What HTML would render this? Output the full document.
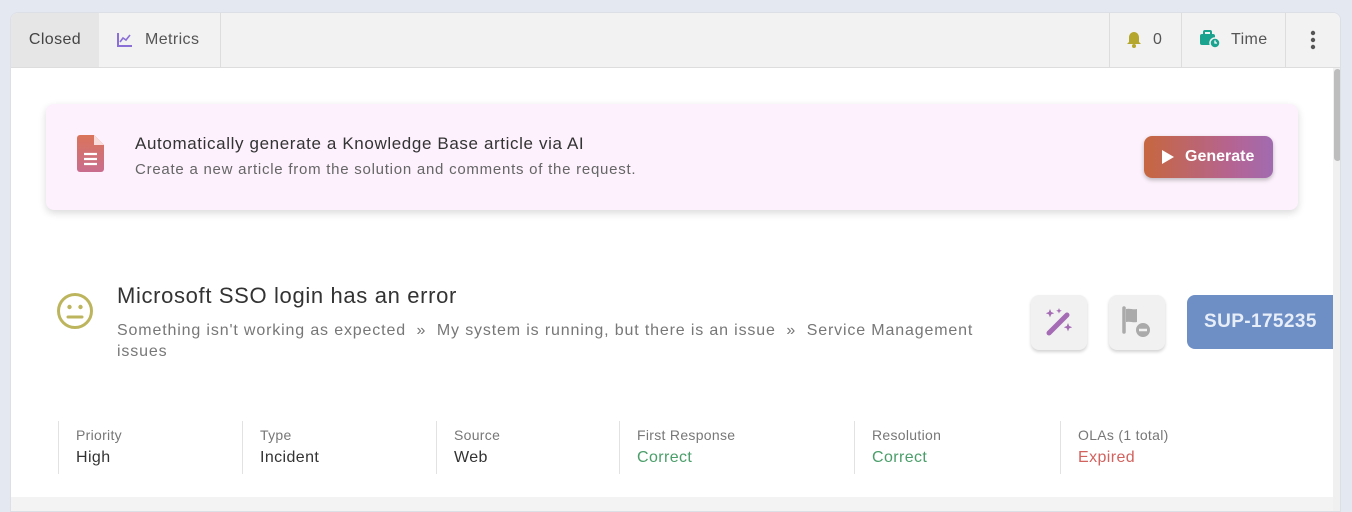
<!DOCTYPE html>
<html><head><meta charset="utf-8"><style>
*{box-sizing:border-box;margin:0;padding:0}
body{width:1352px;height:502px;overflow:hidden;background:#e4e8f1;font-family:"Liberation Sans",sans-serif;position:relative}
.card{position:absolute;left:10px;top:12px;width:1331px;height:500px;background:#fff;border-radius:8px 8px 0 0;overflow:hidden;border:1px solid #dcdfe6}
.hdr{position:absolute;left:0;top:0;width:100%;height:55px;background:#f2f2f2;border-bottom:1px solid #ddd}
.tab{position:absolute;top:0;height:54px;line-height:54px;font-size:16px;color:#555;letter-spacing:.4px}
.abs{position:absolute}
.sep{position:absolute;top:0;width:1px;height:54px;background:#ddd}
.kb{position:absolute;left:35px;top:91px;width:1252px;height:106px;background:#fcf1fc;border-radius:8px;box-shadow:0 3px 8px rgba(0,0,0,.15)}
.btn{position:absolute;left:1098px;top:32px;width:129px;height:42px;border-radius:8px;background:linear-gradient(90deg,#c6673f,#b46494 70%,#a16bb0);color:#fff;font-size:16px;font-weight:bold;line-height:42px;box-shadow:0 2px 4px rgba(0,0,0,.25)}
.ib{position:absolute;top:282px;width:56px;height:55px;background:#f1f1f1;border-radius:8px;box-shadow:0 2px 3px rgba(0,0,0,.18)}
.lbl{position:absolute;top:414px;font-size:14px;color:#777;letter-spacing:.3px}
.val{position:absolute;top:436px;font-size:16px;color:#333;letter-spacing:.4px}
.vl{position:absolute;top:408px;width:1px;height:53px;background:#e2e2e2}
</style></head><body>
<div class="card">
 <div class="hdr">
  <div class="tab" style="left:0;width:88px;background:#e6e6e6;text-align:center;color:#444">Closed</div>
  <svg class="abs" style="left:106px;top:19px" width="16" height="15" viewBox="0 0 16 15"><path d="M1 1v13h14" stroke="#8a6fd6" stroke-width="2" fill="none"/><path d="M3 10l3-4 3 2 4-5" stroke="#8a6fd6" stroke-width="1.6" fill="none"/></svg>
  <div class="tab" style="left:134px">Metrics</div>
  <div class="sep" style="left:209px"></div>
  <div class="sep" style="left:1098px"></div>
  <svg class="abs" style="left:1115px;top:18px" width="16" height="17" viewBox="0 0 16 17"><path d="M8 1c-3 0-5 2.5-5 5.5V11L1 13h14l-2-2V6.5C13 3.5 11 1 8 1z" fill="#b5a72d"/><circle cx="8" cy="15" r="2" fill="#b5a72d"/></svg>
  <div class="tab" style="left:1142px;color:#555">0</div>
  <div class="sep" style="left:1170px"></div>
  <svg class="abs" style="left:1188px;top:17px" width="22" height="19" viewBox="0 0 22 19"><rect x="1" y="4" width="15" height="11" rx="2" fill="#1aa38f"/><rect x="5" y="1" width="7" height="4" rx="1" fill="none" stroke="#1aa38f" stroke-width="2"/><circle cx="16" cy="13" r="5" fill="#1aa38f" stroke="#f2f2f2" stroke-width="1.5"/><path d="M16 10.5v2.5h2" stroke="#fff" stroke-width="1.3" fill="none"/></svg>
  <div class="tab" style="left:1220px">Time</div>
  <div class="sep" style="left:1274px"></div>
  <svg class="abs" style="left:1299px;top:17px" width="6" height="20"><circle cx="3" cy="3" r="2.2" fill="#555"/><circle cx="3" cy="10" r="2.2" fill="#555"/><circle cx="3" cy="17" r="2.2" fill="#555"/></svg>
 </div>
 <div class="kb">
  <svg class="abs" style="left:31px;top:31px" width="27" height="37" viewBox="0 0 27 37"><defs><linearGradient id="g" x1="0" y1="0" x2="0" y2="1"><stop offset="0" stop-color="#da745a"/><stop offset="1" stop-color="#c96d8e"/></linearGradient></defs><path d="M3 0h14l10 10v24a3 3 0 0 1-3 3H3a3 3 0 0 1-3-3V3a3 3 0 0 1 3-3z" fill="url(#g)"/><path d="M17 0v10h10" fill="#f9dcdc"/><path d="M7 19h13M7 24h13M7 29h13" stroke="#fff" stroke-width="2.2"/></svg>
  <div class="abs" style="left:89px;top:30px;font-size:17px;letter-spacing:.62px;color:#333">Automatically generate a Knowledge Base article via AI</div>
  <div class="abs" style="left:89px;top:57px;font-size:15px;letter-spacing:.75px;color:#666">Create a new article from the solution and comments of the request.</div>
  <div class="btn"><svg class="abs" style="left:18px;top:14px" width="12" height="14"><path d="M0 0l12 7-12 7z" fill="#fff"/></svg><span style="position:absolute;left:41px">Generate</span></div>
 </div>
 <svg class="abs" style="left:45px;top:279px" width="38" height="38" viewBox="0 0 38 38"><circle cx="19" cy="19" r="16.5" fill="none" stroke="#bdb55e" stroke-width="3"/><circle cx="13.5" cy="15" r="2.2" fill="#bdb55e"/><circle cx="24.5" cy="15" r="2.2" fill="#bdb55e"/><path d="M12 25h14" stroke="#bdb55e" stroke-width="3" stroke-linecap="round"/></svg>
 <div class="abs" style="left:106px;top:270px;font-size:22px;letter-spacing:.65px;color:#333">Microsoft SSO login has an error</div>
 <div class="abs" style="left:106px;top:307px;width:880px;font-size:16px;letter-spacing:.85px;line-height:21px;color:#777">Something isn't working as expected &nbsp;»&nbsp; My system is running, but there is an issue &nbsp;»&nbsp; Service Management issues</div>
 <div class="ib" style="left:1020px"><svg class="abs" style="left:10px;top:10px" width="34" height="34" viewBox="0 0 34 34"><path d="M8 28L26 10" stroke="#a56cb5" stroke-width="5" stroke-linecap="round"/><path d="M9 4l1.2 3 3 1.2-3 1.2L9 12.4 7.8 9.4 4.8 8.2l3-1.2z M18 3l.8 2 2 .8-2 .8-.8 2-.8-2-2-.8 2-.8z M27 18l1.2 3 3 1.2-3 1.2-1.2 3-1.2-3-3-1.2 3-1.2z" fill="#a56cb5"/></svg></div>
 <div class="ib" style="left:1098px"><svg class="abs" style="left:12px;top:11px" width="34" height="34" viewBox="0 0 34 34"><path d="M3 2v24" stroke="#aaa" stroke-width="3.5" stroke-linecap="round"/><path d="M5 3c4-1 7 1 11 0v13c-4 1-7-1-11 0z" fill="#aaa"/><circle cx="22" cy="24" r="8" fill="#aaa" stroke="#f1f1f1" stroke-width="2"/><path d="M18 24h8" stroke="#f1f1f1" stroke-width="2.5"/></svg></div>
 <div class="abs" style="left:1176px;top:282px;width:160px;height:54px;border-radius:8px 0 0 8px;background:#6e8fc6;color:#e8eef8;font-size:19px;font-weight:bold;letter-spacing:.4px;line-height:54px;padding-left:17px">SUP-175235</div>
 <div class="vl" style="left:47px"></div>
 <div class="lbl" style="left:65px">Priority</div><div class="val" style="left:65px">High</div>
 <div class="vl" style="left:231px"></div>
 <div class="lbl" style="left:249px">Type</div><div class="val" style="left:249px">Incident</div>
 <div class="vl" style="left:425px"></div>
 <div class="lbl" style="left:443px">Source</div><div class="val" style="left:443px">Web</div>
 <div class="vl" style="left:608px"></div>
 <div class="lbl" style="left:626px">First Response</div><div class="val" style="left:626px;color:#4a9e6a">Correct</div>
 <div class="vl" style="left:843px"></div>
 <div class="lbl" style="left:861px">Resolution</div><div class="val" style="left:861px;color:#4a9e6a">Correct</div>
 <div class="vl" style="left:1049px"></div>
 <div class="lbl" style="left:1067px">OLAs (1 total)</div><div class="val" style="left:1067px;color:#d2625e">Expired</div>
 <div class="abs" style="left:0;top:484px;width:1322px;height:20px;background:#f3f3f4"></div>
 <div class="abs" style="left:1322px;top:55px;width:9px;height:450px;background:#f0f0f0"></div>
 <div class="abs" style="left:1323px;top:56px;width:7px;height:92px;background:#bdbdbd;border-radius:4px"></div>
</div>
</body></html>
